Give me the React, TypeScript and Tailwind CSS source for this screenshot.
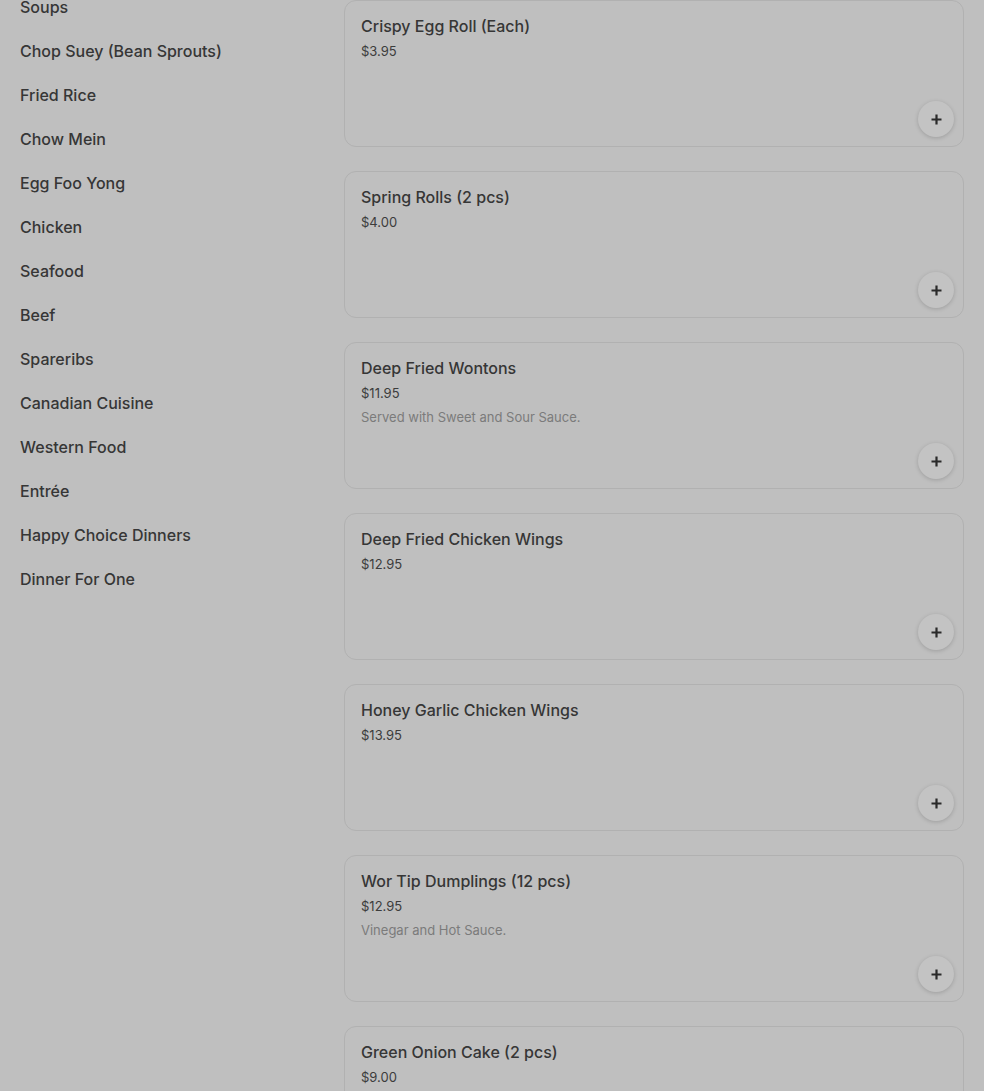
import React from "react";

const cats = [
  "Soups",
  "Chop Suey (Bean Sprouts)",
  "Fried Rice",
  "Chow Mein",
  "Egg Foo Yong",
  "Chicken",
  "Seafood",
  "Beef",
  "Spareribs",
  "Canadian Cuisine",
  "Western Food",
  "Entrée",
  "Happy Choice Dinners",
  "Dinner For One",
];

const items: { name: string; price: string; desc?: string }[] = [
  { name: "Crispy Egg Roll (Each)", price: "$3.95" },
  { name: "Spring Rolls (2 pcs)", price: "$4.00" },
  { name: "Deep Fried Wontons", price: "$11.95", desc: "Served with Sweet and Sour Sauce." },
  { name: "Deep Fried Chicken Wings", price: "$12.95" },
  { name: "Honey Garlic Chicken Wings", price: "$13.95" },
  { name: "Wor Tip Dumplings (12 pcs)", price: "$12.95", desc: "Vinegar and Hot Sauce." },
  { name: "Green Onion Cake (2 pcs)", price: "$9.00" },
];

export default function App() {
  return (
    <div
      className="w-[984px] h-[1091px] overflow-hidden bg-[#bfbfbf] flex"
      style={{ fontFamily: "Inter, 'Noto Sans', sans-serif" }}
    >
      <div className="w-[344px] shrink-0 pl-5 flex flex-col -mt-[15px]">
        {cats.map((c) => (
          <div key={c} className="h-[44px] shrink-0 flex items-center text-[16px] font-medium text-[#363636] leading-6">
            {c}
          </div>
        ))}
      </div>
      <div className="w-[620px] flex flex-col gap-6">
        {items.map((it) => (
          <div
            key={it.name}
            className="h-[147px] shrink-0 rounded-[12px] border border-[#b1b1b1] flex flex-col pl-4 pr-[9px] pt-[13px] pb-[9px]"
          >
            <div className="text-[16px] font-medium leading-6 text-[#363636]">{it.name}</div>
            <div className="text-[13px] leading-6 mt-px text-[#3c3c3c]">{it.price}</div>
            {it.desc && <div className="text-[13px] leading-6 text-[#7b7b7b]">{it.desc}</div>}
            <div className="mt-auto self-end w-9 h-9 rounded-full bg-[#c3c3c3] shadow-[0_1px_4px_rgba(0,0,0,0.18)] flex items-center justify-center">
              <svg width="11" height="11" viewBox="0 0 11 11">
                <path d="M5.5 0.5v10M0.5 5.5h10" stroke="#2a2a2a" strokeWidth="2.2" />
              </svg>
            </div>
          </div>
        ))}
      </div>
    </div>
  );
}
